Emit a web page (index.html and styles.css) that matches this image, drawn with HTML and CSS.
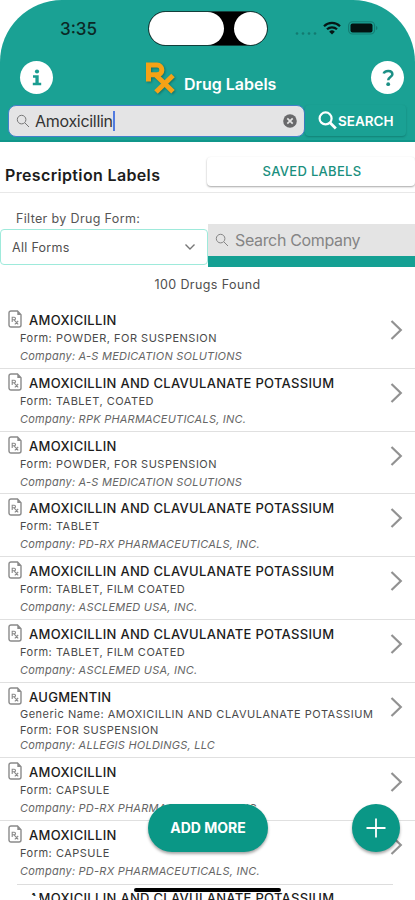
FILE: index.html
```
<!DOCTYPE html>
<html lang="en">
<head>
    <meta charset="UTF-8">
    <meta name="viewport" content="width=device-width, initial-scale=1.0">
    <title>Drug Labels</title>
    <link rel="stylesheet" href="styles.css">
</head>
<body>
    <!-- Shared icons -->
    <svg class="sprite">
        <symbol id="rx-file" viewBox="0 0 14 18">
            <path d="M3 1h6.5L13 4.8V15a2 2 0 0 1-2 2H3a2 2 0 0 1-2-2V3a2 2 0 0 1 2-2z" fill="none" stroke="#8a8a8a" stroke-width="1.4"/>
            <path d="M9.3 1v4H13z" fill="#8a8a8a"/>
            <path d="M4.2 12V7.2h2a1.3 1.3 0 0 1 0 2.6h-2M6 9.8l4.2 4.6M10.2 11L6.8 14.4" fill="none" stroke="#8a8a8a" stroke-width="1.1"/>
        </symbol>
        <symbol id="chevron" viewBox="0 0 13 20">
            <path d="M1.5 1l9.3 9-9.3 9" fill="none" stroke="#929292" stroke-width="2.2"/>
        </symbol>
        <symbol id="magnifier" viewBox="0 0 14 14">
            <circle cx="5.6" cy="5.6" r="4.3" fill="none" stroke="currentColor"/>
            <path d="M8.8 8.8l4.2 4.2" stroke="currentColor"/>
        </symbol>
    </svg>

    <div class="phone">
        <header class="header">
            <div class="status-bar">
                <span class="time">3:35</span>
                <div class="island">
                    <span class="island-pill"></span>
                    <span class="island-lens"></span>
                </div>
                <div class="status-icons">
                    <svg width="22" height="5" viewBox="0 0 22 5" fill="#137a70">
                        <circle cx="2" cy="2.5" r="1.3"/><circle cx="8" cy="2.5" r="1.3"/><circle cx="14" cy="2.5" r="1.3"/><circle cx="20" cy="2.5" r="1.3"/>
                    </svg>
                    <svg class="wifi" width="18" height="14" viewBox="0 0 18 14" fill="none" stroke="#061615" stroke-width="2.2">
                        <path d="M1 5.2a11.4 11.4 0 0 1 16 0M4 8.3a7.2 7.2 0 0 1 10 0"/>
                        <path d="M6.2 10.7a4 4 0 0 1 5.6 0L9 13.5z" fill="#061615" stroke="none"/>
                    </svg>
                    <svg class="battery" width="30" height="14" viewBox="0 0 30 14">
                        <rect x=".6" y=".8" width="26" height="12.2" rx="4" fill="none" stroke="#137d73" stroke-width="1.1"/>
                        <rect x="2.5" y="2.4" width="22" height="9" rx="2" fill="#031210"/>
                        <path d="M28 5v4c2-.8 2-3.2 0-4z" fill="#137d73"/>
                    </svg>
                </div>
            </div>

            <div class="title-bar">
                <span class="round-button">
                    <svg width="10" height="18" viewBox="0 0 10 18" fill="#1b9d91">
                        <circle cx="5" cy="2.5" r="2.1"/>
                        <path d="M1 6.3h5.7v7.4h2.5v2.5H.8v-2.5h2.6V8.8H1z"/>
                    </svg>
                </span>
                <div class="brand">
                    <svg class="brand-logo" width="32" height="35" viewBox="0 0 32 35" fill="none" stroke="#f5a216" stroke-width="5">
                        <path d="M3.5 20.5V4H12a4.9 4.9 0 0 1 0 9.8H3.5M10.500 13.800l17.500 17"/>
                        <path d="M28 14.500L11 31"/>
                    </svg>
                    <span class="brand-name">Drug Labels</span>
                </div>
                <span class="round-button">
                    <svg width="12" height="18" viewBox="0 0 12 18">
                        <path d="M1.7 4.5C2.7 1 10.4.8 10.4 5.2c0 3-4.2 2.7-4.2 6.1" fill="none" stroke="#1b8f85" stroke-width="2.5"/>
                        <circle cx="6.2" cy="15.2" r="1.9" fill="#1b8f85"/>
                    </svg>
                </span>
            </div>

            <div class="search-bar">
                <div class="search-field">
                    <svg class="search-icon" width="14" height="14"><use href="#magnifier"/></svg>
                    <span class="search-text">Amoxicillin</span>
                    <span class="caret"></span>
                    <svg class="clear" width="14" height="14" viewBox="0 0 14 14">
                        <circle cx="7" cy="7" r="6.8" fill="#69696b"/>
                        <path d="M4.3 4.3l5.4 5.4M9.7 4.3L4.3 9.7" stroke="#e5e5e5" stroke-width="1.7"/>
                    </svg>
                </div>
                <div class="search-button">
                    <svg width="19" height="19" viewBox="0 0 19 19" fill="none" stroke="#fff" stroke-width="2.2">
                        <circle cx="7.6" cy="7.4" r="6"/>
                        <path d="M11.8 11.600l6 6" stroke-width="2.800"/>
                    </svg>
                    <span>SEARCH</span>
                </div>
            </div>
        </header>

        <section class="section-bar">
            <h2>Prescription Labels</h2>
            <div class="saved-button">SAVED LABELS</div>
        </section>

        <section class="filters">
            <div class="form-filter">
                <label>Filter by Drug Form:</label>
                <div class="select">
                    <span>All Forms</span>
                    <svg width="12" height="8" viewBox="0 0 12 8" fill="none" stroke="#777" stroke-width="1.4"><path d="M1.5 1.5L6 6l4.5-4.5"/></svg>
                </div>
            </div>
            <div class="company-filter">
                <svg width="14" height="14"><use href="#magnifier"/></svg>
                <span>Search Company</span>
            </div>
        </section>

        <p class="count">100 Drugs Found</p>

        <!-- Results -->
        <main class="results">
            <article class="drug">
                <svg class="file"><use href="#rx-file"/></svg>
                <h3>AMOXICILLIN</h3>
                <p class="form">Form: <b>POWDER, FOR SUSPENSION</b></p>
                <p class="company">Company: A-S MEDICATION SOLUTIONS</p>
                <svg class="arrow"><use href="#chevron"/></svg>
            </article>
            <article class="drug">
                <svg class="file"><use href="#rx-file"/></svg>
                <h3>AMOXICILLIN AND CLAVULANATE POTASSIUM</h3>
                <p class="form">Form: <b>TABLET, COATED</b></p>
                <p class="company">Company: RPK PHARMACEUTICALS, INC.</p>
                <svg class="arrow"><use href="#chevron"/></svg>
            </article>
            <article class="drug">
                <svg class="file"><use href="#rx-file"/></svg>
                <h3>AMOXICILLIN</h3>
                <p class="form">Form: <b>POWDER, FOR SUSPENSION</b></p>
                <p class="company">Company: A-S MEDICATION SOLUTIONS</p>
                <svg class="arrow"><use href="#chevron"/></svg>
            </article>
            <article class="drug">
                <svg class="file"><use href="#rx-file"/></svg>
                <h3>AMOXICILLIN AND CLAVULANATE POTASSIUM</h3>
                <p class="form">Form: <b>TABLET</b></p>
                <p class="company">Company: PD-RX PHARMACEUTICALS, INC.</p>
                <svg class="arrow"><use href="#chevron"/></svg>
            </article>
            <article class="drug">
                <svg class="file"><use href="#rx-file"/></svg>
                <h3>AMOXICILLIN AND CLAVULANATE POTASSIUM</h3>
                <p class="form">Form: <b>TABLET, FILM COATED</b></p>
                <p class="company">Company: ASCLEMED USA, INC.</p>
                <svg class="arrow"><use href="#chevron"/></svg>
            </article>
            <article class="drug">
                <svg class="file"><use href="#rx-file"/></svg>
                <h3>AMOXICILLIN AND CLAVULANATE POTASSIUM</h3>
                <p class="form">Form: <b>TABLET, FILM COATED</b></p>
                <p class="company">Company: ASCLEMED USA, INC.</p>
                <svg class="arrow"><use href="#chevron"/></svg>
            </article>
            <article class="drug drug-tall">
                <svg class="file"><use href="#rx-file"/></svg>
                <h3>AUGMENTIN</h3>
                <p class="form">Generic Name: <b>AMOXICILLIN AND CLAVULANATE POTASSIUM</b></p>
                <p class="form">Form: <b>FOR SUSPENSION</b></p>
                <p class="company">Company: ALLEGIS HOLDINGS, LLC</p>
                <svg class="arrow"><use href="#chevron"/></svg>
            </article>
            <article class="drug">
                <svg class="file"><use href="#rx-file"/></svg>
                <h3>AMOXICILLIN</h3>
                <p class="form">Form: <b>CAPSULE</b></p>
                <p class="company">Company: PD-RX PHARMACEUTICALS, INC.</p>
                <svg class="arrow"><use href="#chevron"/></svg>
            </article>
            <article class="drug drug-short-line">
                <svg class="file"><use href="#rx-file"/></svg>
                <h3>AMOXICILLIN</h3>
                <p class="form">Form: <b>CAPSULE</b></p>
                <p class="company">Company: PD-RX PHARMACEUTICALS, INC.</p>
                <svg class="arrow"><use href="#chevron"/></svg>
            </article>
            <article class="drug drug-last">
                <h3>AMOXICILLIN AND CLAVULANATE POTASSIUM</h3>
            </article>
        </main>

        <!-- Floating controls -->
        <div class="corner"></div>
        <div class="add-more">ADD MORE</div>
        <div class="add">
            <svg width="20" height="20" viewBox="0 0 20 20" stroke="#fff" stroke-width="1.8"><path d="M10 .5v19M.5 10h19"/></svg>
        </div>
        <div class="home-indicator"></div>
    </div>
</body>
</html>
```
FILE: styles.css
```
* {
    box-sizing: border-box;
}
body {
    margin: 0;
    background-color: #fff;
    font-family: Inter, "Liberation Sans", sans-serif;
    color: #333;
}
h2, h3, p {
    margin: 0;
}
.sprite {
    display: none;
}
.phone {
    position: relative;
    width: 415px;
    height: 900px;
    overflow: hidden;
}
svg {
    flex: none;
}

/* Header */
.header {
    height: 142px;
    background-color: #1aa194;
    border-bottom: 2px solid #10968a;
    border-radius: 62px 62px 0 0;
}
.status-bar {
    display: flex;
    height: 58px;
    padding-top: 11px;
    padding-left: 60px;
}
.time {
    width: 88px;
    padding-top: 7px;
    font-size: 17px;
    line-height: 22px;
    font-weight: 500;
    color: #0b2926;
}
.island {
    display: flex;
    justify-content: space-between;
    width: 120px;
    height: 35px;
    border: 1px solid #123f3b;
    border-radius: 18px;
    background-color: #000;
}
.island-pill {
    width: 75px;
    border-radius: 17px;
    background-color: #fff;
}
.island-lens {
    width: 33px;
    border-radius: 50%;
    background-color: #fff;
}
.status-icons {
    display: flex;
    align-items: flex-start;
    padding-top: 10px;
    padding-left: 27px;
}
.status-icons svg:first-child {
    margin-top: 10px;
}
.wifi {
    margin-left: 6px;
}
.battery {
    margin-left: 7px;
}
.title-bar {
    display: flex;
    height: 47px;
    padding: 3px 11px 0 20px;
}
.round-button {
    display: flex;
    align-items: center;
    justify-content: center;
    width: 33px;
    height: 33px;
    border-radius: 50%;
    background-color: #fff;
}
.brand {
    display: flex;
    flex: 1;
    padding-left: 92px;
}
.brand-logo {
    filter: drop-shadow(1px 1px 1px rgba(0, 0, 0, 0.3));
}
.brand-name {
    padding: 13px 0 0 7px;
    font-size: 16px;
    line-height: 20px;
    font-weight: 600;
    white-space: nowrap;
    color: #fff;
}
.search-bar {
    display: flex;
    padding-left: 8px;
}
.search-field {
    display: flex;
    align-items: center;
    width: 297px;
    height: 32px;
    padding: 0 7px;
    border: 1px solid #4380cb;
    border-radius: 8px;
    background-color: #e4e4e5;
}
.search-icon {
    color: #777;
}
.search-text {
    margin-left: 5px;
    font-size: 16px;
    letter-spacing: -0.3px;
}
.caret {
    width: 2px;
    height: 20px;
    background-color: #527be0;
}
.clear {
    margin-left: auto;
}
.search-button {
    display: flex;
    align-items: center;
    gap: 1px;
    width: 101px;
    height: 31px;
    padding-left: 13px;
    border-radius: 4px;
    box-shadow: 0 1px 2px rgba(0, 70, 60, 0.35);
    font-size: 13.5px;
    font-weight: 600;
    color: #fff;
}

/* Title row */
.section-bar {
    display: flex;
    height: 51px;
    padding-top: 15px;
    border-bottom: 1px solid #e8e8e8;
}
.section-bar h2 {
    width: 207px;
    padding: 7px 0 0 5px;
    font-size: 16px;
    line-height: 22px;
    font-weight: 600;
    letter-spacing: 0.35px;
    white-space: nowrap;
    color: #1c1c1c;
}
.saved-button {
    width: 208px;
    height: 29px;
    border-radius: 4px;
    box-shadow: 0 1px 2px rgba(0, 0, 0, 0.35);
    font-size: 13px;
    line-height: 29px;
    font-weight: 500;
    letter-spacing: 0.3px;
    text-align: center;
    padding-left: 2px;
    color: #1a8f7e;
}

/* Filters */
.filters {
    display: flex;
    height: 74px;
}
.form-filter {
    width: 208px;
    padding-top: 17px;
}
.form-filter label {
    display: block;
    padding-left: 16px;
    font-size: 12.5px;
    line-height: 18px;
    letter-spacing: 0.35px;
    color: #555;
}
.select {
    display: flex;
    align-items: center;
    justify-content: space-between;
    height: 36px;
    margin-top: 1px;
    padding: 0 11px;
    border: 1.5px solid #9eeadb;
    border-radius: 4px;
    font-size: 12.5px;
    letter-spacing: 0.3px;
    color: #505050;
}
.company-filter {
    display: flex;
    align-items: center;
    gap: 6px;
    width: 207px;
    height: 43px;
    margin-top: 31px;
    padding-left: 7px;
    border-bottom: 11px solid #14a093;
    background-color: #e4e4e4;
    font-size: 16px;
    letter-spacing: -0.35px;
    color: #858585;
}
.count {
    height: 39px;
    padding-top: 8px;
    font-size: 12.5px;
    line-height: 19px;
    letter-spacing: 0.4px;
    text-align: center;
    color: #4e4e4e;
}

/* Drug list */
.drug {
    position: relative;
    height: 62.8px;
    padding: 5px 0 0 20px;
    border-bottom: 1.5px solid #e0e0e0;
    white-space: nowrap;
}
.drug h3 {
    padding-left: 9px;
    font-size: 13px;
    line-height: 18px;
    font-weight: 500;
    letter-spacing: 0.3px;
    color: #1c1c1c;
}
.drug p {
    font-size: 11px;
    line-height: 18px;
}
.drug .form {
    letter-spacing: 0.5px;
    color: #4a4a4a;
}
.drug b {
    font-weight: 400;
}
.drug .company {
    font-style: italic;
    letter-spacing: 0.23px;
    color: #666;
}
.file {
    position: absolute;
    top: 4px;
    left: 8px;
    width: 14px;
    height: 18px;
}
.arrow {
    position: absolute;
    top: 14px;
    left: 390px;
    width: 13px;
    height: 20px;
}
.drug-tall {
    height: 75.4px;
}
.drug-tall p {
    line-height: 15.5px;
}
.drug-tall h3 {
    margin-bottom: 1.5px;
}
.drug-short-line {
    border-bottom: none;
}
.drug-last {
    margin: 0 22px 0 17px;
    padding-top: 4px;
    padding-left: 3px;
    border-top: 1px solid #ddd;
    border-bottom: none;
}

/* Floating controls */
.corner {
    position: absolute;
    left: 20px;
    bottom: 0;
    width: 20px;
    height: 8px;
    background: linear-gradient(20deg, #fff 60%, transparent 61%);
}
.add-more {
    position: absolute;
    top: 804px;
    left: 148px;
    width: 120px;
    height: 48px;
    border-radius: 24px;
    background-color: #0a9786;
    box-shadow: 0 2px 3px rgba(0, 0, 0, 0.35);
    font-size: 14px;
    line-height: 48px;
    font-weight: 700;
    text-align: center;
    color: #fff;
}
.add {
    position: absolute;
    top: 804px;
    left: 352px;
    display: flex;
    align-items: center;
    justify-content: center;
    width: 48px;
    height: 48px;
    border-radius: 50%;
    background-color: #0a9786;
    box-shadow: 0 2px 3px rgba(0, 0, 0, 0.35);
}
.home-indicator {
    position: absolute;
    left: 134px;
    top: 888px;
    width: 147px;
    height: 4px;
    border-radius: 2px;
    background-color: #000;
}
```
